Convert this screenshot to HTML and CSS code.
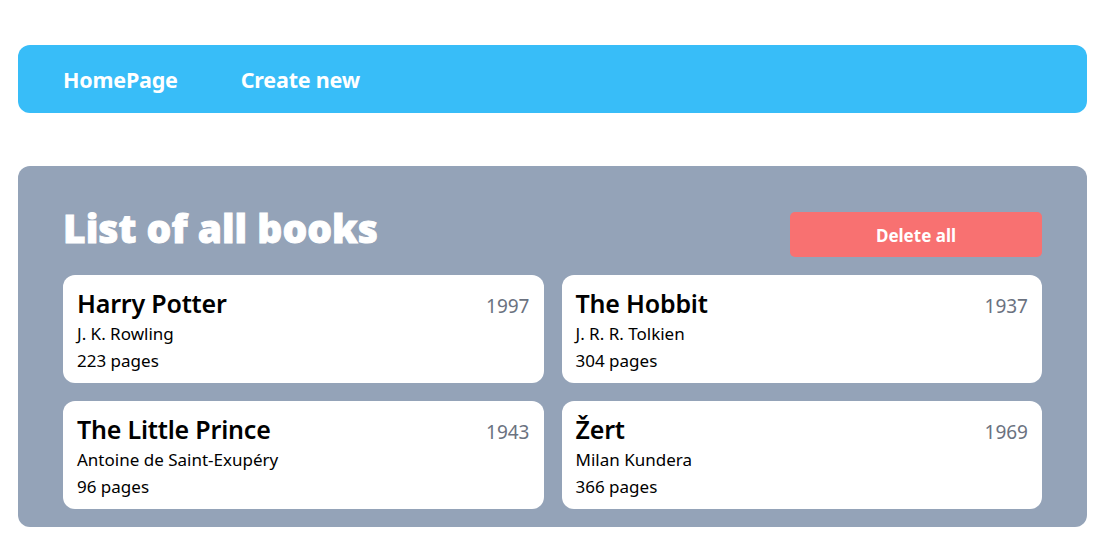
FILE: index.html
```html
<!DOCTYPE html>
<html lang="en">
<head>
<meta charset="utf-8">
<title>Books</title>
<link rel="stylesheet" href="styles.css">
</head>
<body>
<div class="page">
  <nav class="nav">
    <a class="nav-link" href="#">HomePage</a>
    <a class="nav-link" href="#">Create new</a>
  </nav>
  <main class="panel">
    <div class="panel-head">
      <h1 class="title">List of all books</h1>
      <button class="btn-delete">Delete all</button>
    </div>
    <div class="grid">
      <div class="card">
        <div class="card-top"><span class="book-title">Harry Potter</span><span class="year">1997</span></div>
        <div class="line">J. K. Rowling</div>
        <div class="line">223 pages</div>
      </div>
      <div class="card">
        <div class="card-top"><span class="book-title">The Hobbit</span><span class="year">1937</span></div>
        <div class="line">J. R. R. Tolkien</div>
        <div class="line">304 pages</div>
      </div>
      <div class="card">
        <div class="card-top"><span class="book-title">The Little Prince</span><span class="year">1943</span></div>
        <div class="line">Antoine de Saint-Exupéry</div>
        <div class="line">96 pages</div>
      </div>
      <div class="card">
        <div class="card-top"><span class="book-title">Žert</span><span class="year">1969</span></div>
        <div class="line">Milan Kundera</div>
        <div class="line">366 pages</div>
      </div>
    </div>
  </main>
</div>
</body>
</html>
```
FILE: styles.css
```css
* { box-sizing: border-box; }
html, body { margin: 0; padding: 0; background: #ffffff; }
body {
  font-family: "Noto Sans", "Open Sans", "DejaVu Sans", sans-serif;
  color: #000;
}
.page {
  padding: 45px 17px 0 18px;
  display: flex;
  flex-direction: column;
  gap: 53px;
}
.nav {
  background: #38bdf8;
  border-radius: 12px;
  height: 68px;
  display: flex;
  align-items: center;
  padding-left: 45px;
  gap: 63px;
}
.nav-link {
  color: #fff;
  text-decoration: none;
  font-weight: 700;
  font-size: 21.5px;
  letter-spacing: -0.2px;
}
.panel {
  background: #94a3b8;
  border-radius: 12px;
  padding: 36px 45px 18px 45px;
}
.panel-head {
  display: flex;
  justify-content: space-between;
  align-items: flex-start;
  margin-bottom: 18px;
}
.title {
  margin: 0;
  color: #fff;
  font-size: 39px;
  font-weight: 900;
  line-height: 52px;
  letter-spacing: 0;
  -webkit-text-stroke: 0.9px #fff;
}
.btn-delete {
  margin-top: 10px;
  width: 252px;
  height: 45px;
  border: none;
  border-radius: 5px;
  background: #f87171;
  color: #fff;
  font-family: inherit;
  font-weight: 700;
  font-size: 17px;
  padding-top: 2px;
}
.grid {
  display: grid;
  grid-template-columns: 1fr 1fr;
  gap: 18px;
}
.card {
  background: #fff;
  border-radius: 12px;
  height: 108px;
  padding: 11px 14px 0 14px;
}
.card-top {
  display: flex;
  justify-content: space-between;
  align-items: baseline;
  height: 34px;
}
.book-title {
  font-size: 25px;
  font-weight: 600;
  letter-spacing: -0.2px;
}
.year {
  font-size: 19px;
  color: #6b7280;
}
.line {
  font-size: 17px;
  line-height: 27px;
}
```
